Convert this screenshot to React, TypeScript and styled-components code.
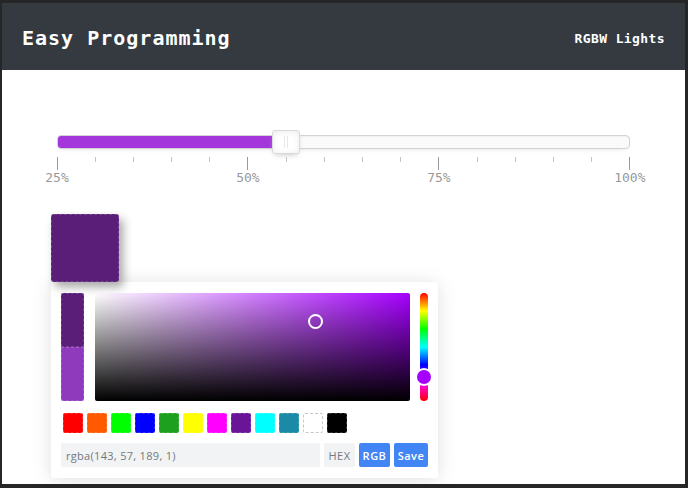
import React from 'react';
import styled, { createGlobalStyle } from 'styled-components';

const GlobalStyle = createGlobalStyle`
  html, body { margin: 0; padding: 0; }
  body { background: #262626; }
  *, *::before, *::after { box-sizing: border-box; }
`;

const Frame = styled.div`
  width: 688px;
  height: 488px;
  padding: 3px 3px 4px 2px;
  background: #262626;
`;

const Page = styled.div`
  height: 100%;
  background: #fff;
  display: flex;
  flex-direction: column;
  overflow: hidden;
`;

const Header = styled.header`
  flex: none;
  height: 67px;
  padding: 3px 20px 0 20px;
  background: #343a40;
  color: #fff;
  display: flex;
  align-items: center;
  justify-content: space-between;
  font-family: "DejaVu Sans Mono", monospace;
`;

const Title = styled.h1`
  margin: 0;
  font-size: 20px;
  font-weight: bold;
  letter-spacing: 1px;
  line-height: 1;
`;

const Subtitle = styled.span`
  font-size: 13px;
  font-weight: bold;
  letter-spacing: 0.4px;
  line-height: 1;
`;

const Main = styled.main`
  flex: 1;
  display: flex;
  flex-direction: column;
  padding-top: 65px;
`;

const SliderSection = styled.div`
  margin: 0 55px;
`;

const Track = styled.div`
  position: relative;
  height: 14px;
  border: 1px solid #d3d3d3;
  border-radius: 4px;
  background: #fafafa;
  box-shadow: inset 0 1px 1px #f0f0f0, 0 3px 6px -5px #bbb;
`;

const Fill = styled.div`
  height: 100%;
  background: #a337dc;
  border-radius: 3px 0 0 3px;
`;

const Thumb = styled.div`
  position: absolute;
  top: -6px;
  width: 28px;
  height: 24px;
  margin-left: -14px;
  border: 1px solid #d9d9d9;
  border-radius: 3px;
  background: #fff;
  box-shadow: inset 0 0 1px #fff, inset 0 1px 7px #ebebeb, 0 3px 6px -3px #bbb;
  &::before,
  &::after {
    content: "";
    position: absolute;
    top: 5px;
    left: 11px;
    width: 1px;
    height: 12px;
    background: #e8e7e6;
  }
  &::after {
    left: 14px;
  }
`;

const TickRow = styled.div`
  display: flex;
  justify-content: space-between;
  margin-top: 8px;
  height: 28px;
`;

const Tick = styled.div`
  width: 0;
  display: flex;
  flex-direction: column;
  align-items: center;
`;

const Mark = styled.div<{ $large?: boolean }>`
  flex: none;
  width: 1px;
  height: ${(p) => (p.$large ? 13 : 5)}px;
  background: ${(p) => (p.$large ? '#9a9a9a' : '#c4c4c4')};
`;

const TickLabel = styled.span`
  white-space: nowrap;
  font-family: "DejaVu Sans Mono", monospace;
  font-size: 13px;
  line-height: 15px;
  color: #999;
`;

const PickerSection = styled.div`
  margin-top: 29px;
  padding-left: 49px;
  display: flex;
  flex-direction: column;
  align-items: flex-start;
`;

const ColorButton = styled.div<{ $color: string }>`
  position: relative;
  z-index: 1;
  width: 68px;
  height: 68px;
  border-radius: 3px;
  background: ${(p) => p.$color};
  outline: 1px dashed rgba(255, 255, 255, 0.18);
  outline-offset: -1px;
  box-shadow: 4px 5px 10px rgba(0, 0, 0, 0.35);
`;

const Popup = styled.div`
  width: 387px;
  padding: 11px 10px 11px 10px;
  background: #fff;
  border-radius: 2px;
  box-shadow: 0 2px 21px 0 rgba(0, 0, 0, 0.1), 0 0 14px 0 rgba(0, 0, 0, 0.03);
  display: flex;
  flex-direction: column;
  font-family: "Open Sans", "Noto Sans", sans-serif;
`;

const Selection = styled.div`
  display: flex;
  height: 108px;
`;

const Preview = styled.div`
  width: 23px;
  margin-right: 11px;
  display: flex;
  flex-direction: column;
  border-radius: 2px;
  overflow: hidden;
`;

const PreviewHalf = styled.div<{ $color: string }>`
  flex: 1;
  background: ${(p) => p.$color};
  outline: 1px dashed rgba(255, 255, 255, 0.18);
  outline-offset: -1px;
`;

const Palette = styled.div<{ $hue: number }>`
  position: relative;
  flex: 1;
  margin-right: 10px;
  border-radius: 2px;
  background: linear-gradient(to top, #000, rgba(0, 0, 0, 0)),
    linear-gradient(to right, #fff, hsl(${(p) => p.$hue}, 100%, 50%));
`;

const Cursor = styled.div`
  position: absolute;
  width: 15px;
  height: 15px;
  margin: -7.5px 0 0 -7.5px;
  border: 2px solid #fff;
  border-radius: 50%;
`;

const HueBar = styled.div`
  position: relative;
  width: 8px;
  border-radius: 4px;
  background: linear-gradient(
    to bottom,
    #f00 0%,
    #ff0 16.66%,
    #0f0 33.33%,
    #0ff 50%,
    #00f 66.66%,
    #f0f 83.33%,
    #f00 100%
  );
`;

const HueKnob = styled.div<{ $hue: number }>`
  position: absolute;
  left: 50%;
  width: 14px;
  height: 14px;
  margin: -7px 0 0 -7px;
  border-radius: 50%;
  background: hsl(${(p) => p.$hue}, 100%, 50%);
  box-shadow: 0 0 0 2px #fff;
`;

const Swatches = styled.div`
  display: flex;
  gap: 4px;
  margin-top: 12px;
  padding-left: 2px;
`;

const Swatch = styled.div<{ $color: string; $light?: boolean }>`
  width: 20px;
  height: 20px;
  border-radius: 2px;
  background: ${(p) => p.$color};
  outline: 1px dashed ${(p) => (p.$light ? 'rgba(0, 0, 0, 0.22)' : 'rgba(255, 255, 255, 0.2)')};
  outline-offset: -1px;
`;

const Interaction = styled.div`
  display: flex;
  gap: 4px;
  margin-top: 10px;
  height: 24px;
`;

const Result = styled.input`
  width: 259px;
  height: 24px;
  margin: 0;
  padding: 0 5px;
  border: none;
  border-radius: 2px;
  background: #f1f3f4;
  color: #75797e;
  font-family: inherit;
  font-size: 11px;
  letter-spacing: 0.3px;
  outline: none;
`;

const ActionButton = styled.button<{ $active?: boolean; $w: number }>`
  width: ${(p) => p.$w}px;
  height: 24px;
  margin: 0;
  padding: 0;
  border: none;
  border-radius: 2px;
  background: ${(p) => (p.$active ? '#4285f4' : '#f1f3f4')};
  color: ${(p) => (p.$active ? '#fff' : '#75797e')};
  font-family: inherit;
  font-size: 11px;
  font-weight: ${(p) => (p.$active ? 600 : 400)};
  letter-spacing: 0.5px;
  text-align: center;
`;

const ticks = Array.from({ length: 16 }, (_, i) => i);
const labels: Record<number, string> = { 0: '25%', 5: '50%', 10: '75%', 15: '100%' };

const swatchColors = [
  '#ff0000',
  '#ff5a00',
  '#00ff00',
  '#0000ff',
  '#1da01d',
  '#ffff00',
  '#ff00ff',
  '#6a1597',
  '#00ffff',
  '#1b8aa6',
  '#ffffff',
  '#000000',
];

export default function App() {
  const sliderPct = 40;
  const hue = 279;
  const sat = 0.7;
  const val = 0.74;
  const previous = '#5a1e79';
  const current = 'rgb(143, 57, 189)';

  return (
    <Frame>
      <GlobalStyle />
      <Page>
        <Header>
          <Title>Easy Programming</Title>
          <Subtitle>RGBW Lights</Subtitle>
        </Header>
        <Main>
          <SliderSection>
            <Track>
              <Fill style={{ width: `${sliderPct}%` }} />
              <Thumb style={{ left: `${sliderPct}%` }} />
            </Track>
            <TickRow>
              {ticks.map((i) => (
                <Tick key={i}>
                  <Mark $large={i % 5 === 0} />
                  {labels[i] && <TickLabel>{labels[i]}</TickLabel>}
                </Tick>
              ))}
            </TickRow>
          </SliderSection>
          <PickerSection>
            <ColorButton $color={previous} />
            <Popup>
              <Selection>
                <Preview>
                  <PreviewHalf $color={previous} />
                  <PreviewHalf $color={current} />
                </Preview>
                <Palette $hue={hue}>
                  <Cursor style={{ left: `${sat * 100}%`, top: `${(1 - val) * 100}%` }} />
                </Palette>
                <HueBar>
                  <HueKnob $hue={hue} style={{ top: `${(hue / 360) * 100}%` }} />
                </HueBar>
              </Selection>
              <Swatches>
                {swatchColors.map((c) => (
                  <Swatch key={c} $color={c} $light={c === '#ffffff'} />
                ))}
              </Swatches>
              <Interaction>
                <Result readOnly value="rgba(143, 57, 189, 1)" />
                <ActionButton $w={31}>HEX</ActionButton>
                <ActionButton $w={31} $active>
                  RGB
                </ActionButton>
                <ActionButton $w={34} $active>
                  Save
                </ActionButton>
              </Interaction>
            </Popup>
          </PickerSection>
        </Main>
      </Page>
    </Frame>
  );
}
